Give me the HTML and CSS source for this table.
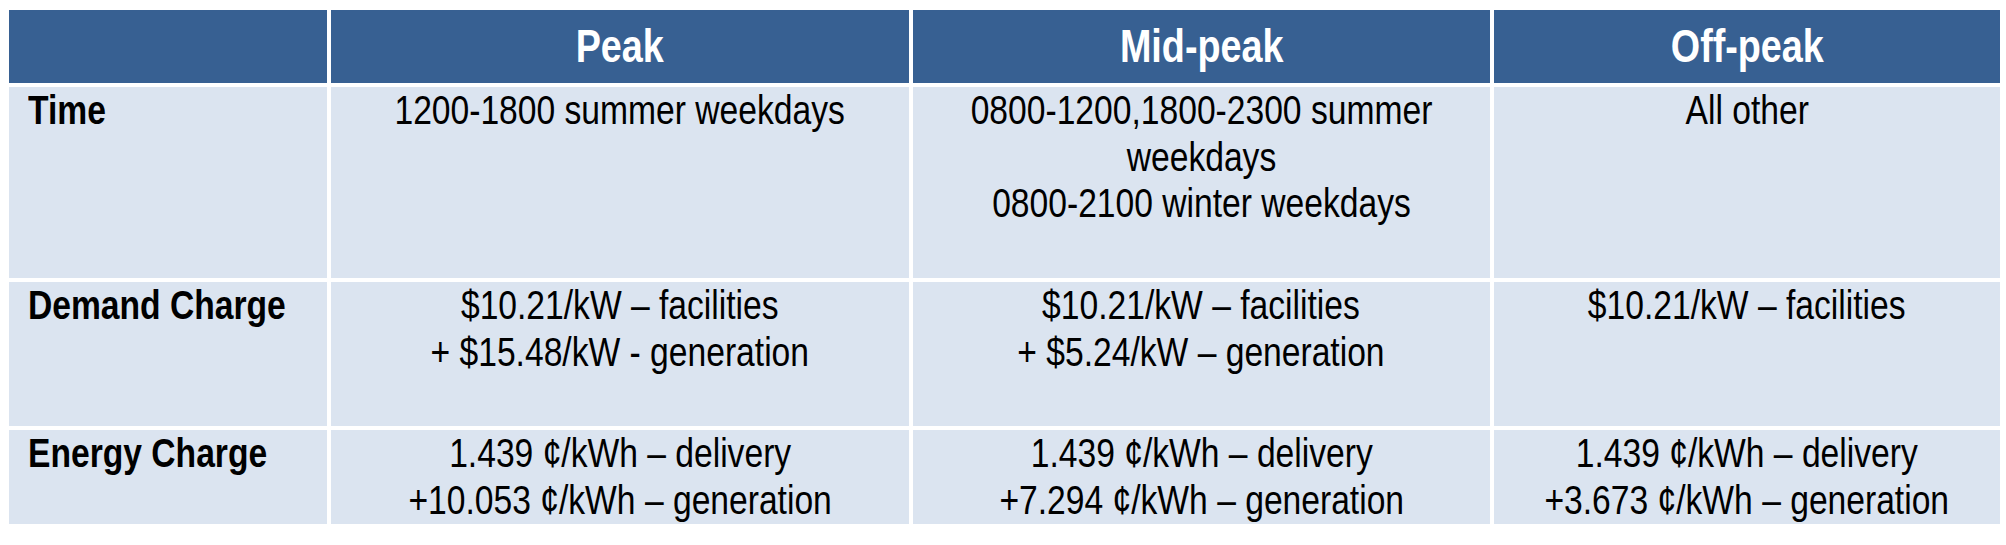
FILE: index.html
```html
<!DOCTYPE html>
<html lang="en">
<head>
<meta charset="utf-8">
<title>Time-of-use rates</title>
<link rel="stylesheet" href="styles.css">
</head>
<body>
<div class="rates">
  <div class="cell head"></div>
  <div class="cell head"><span class="txt">Peak</span></div>
  <div class="cell head"><span class="txt">Mid-peak</span></div>
  <div class="cell head"><span class="txt">Off-peak</span></div>

  <div class="cell label"><span class="txt">Time</span></div>
  <div class="cell val"><span class="txt">1200-1800 summer weekdays</span></div>
  <div class="cell val"><span class="txt">0800-1200,1800-2300 summer<br>weekdays<br>0800-2100 winter weekdays</span></div>
  <div class="cell val"><span class="txt">All other</span></div>

  <div class="cell label"><span class="txt">Demand Charge</span></div>
  <div class="cell val"><span class="txt">$10.21/kW – facilities<br>+ $15.48/kW - generation</span></div>
  <div class="cell val"><span class="txt">$10.21/kW – facilities<br>+ $5.24/kW – generation</span></div>
  <div class="cell val"><span class="txt">$10.21/kW – facilities</span></div>

  <div class="cell label"><span class="txt">Energy Charge</span></div>
  <div class="cell val"><span class="txt">1.439 ¢/kWh – delivery<br>+10.053 ¢/kWh – generation</span></div>
  <div class="cell val"><span class="txt">1.439 ¢/kWh – delivery<br>+7.294 ¢/kWh – generation</span></div>
  <div class="cell val"><span class="txt">1.439 ¢/kWh – delivery<br>+3.673 ¢/kWh – generation</span></div>
</div>
</body>
</html>
```

FILE: styles.css
```css
html, body {
  margin: 0;
  padding: 0;
  background: #ffffff;
}

body {
  padding: 10px 0 0 9px;
  font-family: "Liberation Sans", Arial, sans-serif;
  color: #000000;
}

.rates {
  display: grid;
  grid-template-columns: 318px 577.5px 577.5px 506px;
  grid-template-rows: 73px 191px 144px 94px;
  gap: 4px;
  width: 1991px;
}

.cell {
  background: #dbe4f0;
  font-size: 41px;
  line-height: 46.5px;
  display: flex;
  flex-direction: column;
  overflow: hidden;
}

/* Arial Narrow look: Arial proportions compressed horizontally */
.txt {
  white-space: nowrap;
  transform: scaleX(0.82);
}

.head {
  background: #376092;
  color: #ffffff;
  font-weight: bold;
  font-size: 46px;
  justify-content: center;
  align-items: center;
}

.label {
  font-weight: bold;
  padding-left: 19px;
  align-items: flex-start;
}

.label .txt {
  transform-origin: left center;
}

.val {
  align-items: center;
  text-align: center;
}

.val .txt {
  transform-origin: center center;
}
```
